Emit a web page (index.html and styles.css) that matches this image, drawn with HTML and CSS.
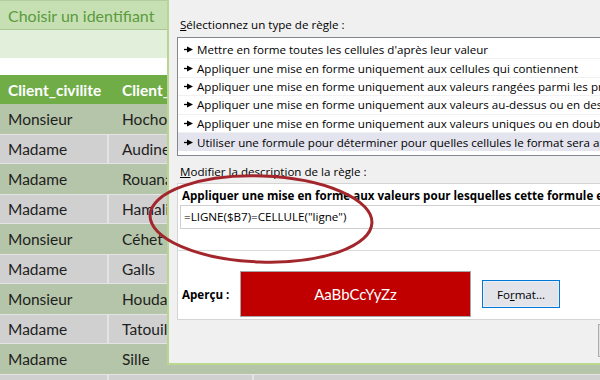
FILE: index.html
```html
<!DOCTYPE html>
<html lang="fr">
<head>
<meta charset="utf-8">
<title>Mise en forme conditionnelle</title>
<link rel="stylesheet" href="styles.css">
</head>
<body>
<div class="screen">
  <div class="sheet">
    <div class="band band-title">Choisir un identifiant</div>
    <div class="band band-sub"></div>
    <div class="band-gap"></div>
    <div class="row head"><div class="cell c1">Client_civilite</div><div class="cell c2">Client_nom</div><div class="cell"></div></div>
    <div class="row green"><div class="cell c1">Monsieur</div><div class="cell c2">Hochon</div><div class="cell"></div></div>
    <div class="row gray"><div class="cell c1">Madame</div><div class="cell c2">Audinet</div><div class="cell"></div></div>
    <div class="row green"><div class="cell c1">Madame</div><div class="cell c2">Rouanas</div><div class="cell"></div></div>
    <div class="row gray"><div class="cell c1">Madame</div><div class="cell c2">Hamalian</div><div class="cell"></div></div>
    <div class="row green"><div class="cell c1">Monsieur</div><div class="cell c2">Céhet</div><div class="cell"></div></div>
    <div class="row gray"><div class="cell c1">Madame</div><div class="cell c2">Galls</div><div class="cell"></div></div>
    <div class="row green"><div class="cell c1">Monsieur</div><div class="cell c2">Houda</div><div class="cell"></div></div>
    <div class="row gray"><div class="cell c1">Madame</div><div class="cell c2">Tatouille</div><div class="cell"></div></div>
    <div class="row green"><div class="cell c1">Madame</div><div class="cell c2">Sille</div><div class="cell"></div></div>
    <div class="row gray"><div class="cell c1"></div><div class="cell c2"></div><div class="cell"></div></div>
  </div>

  <div class="dialog">
    <div class="label"><span class="acc">S</span>électionnez un type de règle :</div>
    <div class="list">
      <div class="item"><svg class="arr" viewBox="0 0 9 7" width="9" height="7"><path d="M0 3.5h3.5" stroke="#000" stroke-width="1.3"/><path d="M3 0.6 9 3.5 3 6.4z" fill="#000"/></svg><span>Mettre en forme toutes les cellules d'après leur valeur</span></div>
      <div class="item"><svg class="arr" viewBox="0 0 9 7" width="9" height="7"><path d="M0 3.5h3.5" stroke="#000" stroke-width="1.3"/><path d="M3 0.6 9 3.5 3 6.4z" fill="#000"/></svg><span>Appliquer une mise en forme uniquement aux cellules qui contiennent</span></div>
      <div class="item"><svg class="arr" viewBox="0 0 9 7" width="9" height="7"><path d="M0 3.5h3.5" stroke="#000" stroke-width="1.3"/><path d="M3 0.6 9 3.5 3 6.4z" fill="#000"/></svg><span>Appliquer une mise en forme uniquement aux valeurs rangées parmi les premières ou les dernières valeurs</span></div>
      <div class="item"><svg class="arr" viewBox="0 0 9 7" width="9" height="7"><path d="M0 3.5h3.5" stroke="#000" stroke-width="1.3"/><path d="M3 0.6 9 3.5 3 6.4z" fill="#000"/></svg><span>Appliquer une mise en forme uniquement aux valeurs au-dessus ou en dessous de la moyenne</span></div>
      <div class="item"><svg class="arr" viewBox="0 0 9 7" width="9" height="7"><path d="M0 3.5h3.5" stroke="#000" stroke-width="1.3"/><path d="M3 0.6 9 3.5 3 6.4z" fill="#000"/></svg><span>Appliquer une mise en forme uniquement aux valeurs uniques ou en double</span></div>
      <div class="item selected"><svg class="arr" viewBox="0 0 9 7" width="9" height="7"><path d="M0 3.5h3.5" stroke="#000" stroke-width="1.3"/><path d="M3 0.6 9 3.5 3 6.4z" fill="#000"/></svg><span>Utiliser une formule pour déterminer pour quelles cellules le format sera appliqué</span></div>
    </div>
    <div class="label label2"><span class="acc">M</span>odifier la description de la règle :</div>
    <div class="panel">
      <div class="panel-title">Appliquer une mise en forme aux valeurs pour lesquelles cette formule est vraie :</div>
      <div class="formula">=LIGNE($B7)=CELLULE("ligne")</div>
      <div class="separator"></div>
      <div class="preview-row">
        <div class="preview-label">Aperçu :</div>
        <div class="preview">AaBbCcYyZz</div>
        <div class="btn btn-format">Fo<span class="acc">r</span>mat...</div>
      </div>
    </div>
    <div class="footer">
      <div class="btn btn-ok">OK</div>
    </div>
  </div>

  <svg class="annot" viewBox="0 0 600 380" width="600" height="380">
    <ellipse cx="261" cy="219" rx="111" ry="43" transform="rotate(2 261 219)" fill="none" stroke="#a3262c" stroke-width="3"/>
  </svg>
</div>
</body>
</html>
```

FILE: styles.css
```css
html, body {
  margin: 0;
  padding: 0;
  background: #ffffff;
}

.screen {
  position: relative;
  width: 600px;
  height: 380px;
  overflow: hidden;
}

/* ---------- spreadsheet ---------- */
.sheet {
  display: flex;
  flex-direction: column;
  font-family: "Lato", "Liberation Sans", sans-serif;
  font-size: 15.5px;
  color: #1e1e1e;
}

.band {
  box-sizing: border-box;
}

.band-title {
  height: 30px;
  line-height: 30px;
  padding-left: 8px;
  background: #c6e0b4;
  border-top: 1px solid #b0cf9c;
  border-bottom: 1px solid #a8c894;
  color: #5b9a3c;
  font-size: 16px;
}

.band-sub {
  height: 28px;
  background: #e2efda;
}

.band-gap {
  height: 17px;
  background: #ffffff;
}

.row {
  display: grid;
  grid-template-columns: 107px 143px 1fr;
  column-gap: 2px;
  height: 30px;
  box-sizing: border-box;
}

.cell {
  display: flex;
  align-items: center;
  white-space: nowrap;
  overflow: hidden;
}

.c1 {
  padding-left: 8px;
}

.c2 {
  padding-left: 13px;
}

.head {
  height: 29px;
  background: #70ad47;
  color: #ffffff;
  font-weight: 700;
}

.green {
  background: #b5c5a9;
}

.gray {
  background: #e4e4e4;
  padding: 1px 0;
}

.gray .cell {
  background: #d0d0d0;
}

/* ---------- dialog ---------- */
.dialog {
  position: absolute;
  left: 167px;
  top: 0;
  width: 516px;
  height: 365px;
  box-sizing: border-box;
  padding: 17px 10px 0 8px;
  background: #f0f0f0;
  border-left: 2px solid #b9d592;
  border-bottom: 2px solid #bcd78e;
  display: flex;
  flex-direction: column;
  font-family: "Open Sans", "Noto Sans", sans-serif;
  font-size: 11.6px;
  color: #000000;
}

.label {
  line-height: 16px;
  padding-left: 3px;
  white-space: nowrap;
}

.acc {
  text-decoration: underline;
}

.list {
  margin-top: 4px;
  border: 1px solid #828790;
  background: #ffffff;
  padding: 3px 0 4px;
}

.item {
  height: 18.4px;
  box-sizing: border-box;
  display: flex;
  align-items: center;
  gap: 4px;
  padding-left: 6px;
  border-bottom: 1px solid #f1f1f1;
  white-space: nowrap;
}

.item.selected {
  background: #e4e4ee;
  border-bottom: 0;
}

.arr {
  flex: none;
}

.label2 {
  margin-top: 8px;
}

.panel {
  margin-top: 3px;
  height: 137px;
  box-sizing: border-box;
  background: #ffffff;
  border: 1px solid #d4d4d4;
  padding: 4px 0 0 4px;
  display: flex;
  flex-direction: column;
}

.panel-title {
  font-weight: 700;
  line-height: 16px;
  white-space: nowrap;
}

.formula {
  margin: 1px 8px 0 -2px;
  height: 24px;
  box-sizing: border-box;
  border: 1px solid #cfcfcf;
  padding-left: 3px;
  line-height: 22px;
  white-space: nowrap;
}

.separator {
  margin: 21px 0 0 -4px;
  border-top: 1px solid #dadada;
}

.preview-row {
  flex: 1;
  display: flex;
  align-items: center;
  gap: 11px;
  padding: 19px 0 1px;
  box-sizing: border-box;
}

.preview-label {
  font-weight: 700;
  width: 47px;
  white-space: nowrap;
}

.preview {
  width: 231px;
  height: 46px;
  box-sizing: border-box;
  background: #c00000;
  border: 1px solid #a6a6a6;
  color: #ffffff;
  font-family: "Lato", "Liberation Sans", sans-serif;
  font-size: 15px;
  display: flex;
  align-items: center;
  justify-content: center;
}

.btn {
  box-sizing: border-box;
  display: flex;
  align-items: center;
  justify-content: center;
  white-space: nowrap;
}

.btn-format {
  width: 78px;
  height: 28px;
  background: #e3e3ea;
  border: 1px solid #0078d7;
  box-shadow: inset 0 0 0 1px #e9eef7;
}

.footer {
  margin-top: 4px;
  display: flex;
  justify-content: flex-end;
}

.btn-ok {
  width: 75px;
  height: 33px;
  background: #e1e1e1;
  border: 1px solid #adadad;
}

/* ---------- annotation ---------- */
.annot {
  position: absolute;
  left: 0;
  top: 0;
  pointer-events: none;
}
```
